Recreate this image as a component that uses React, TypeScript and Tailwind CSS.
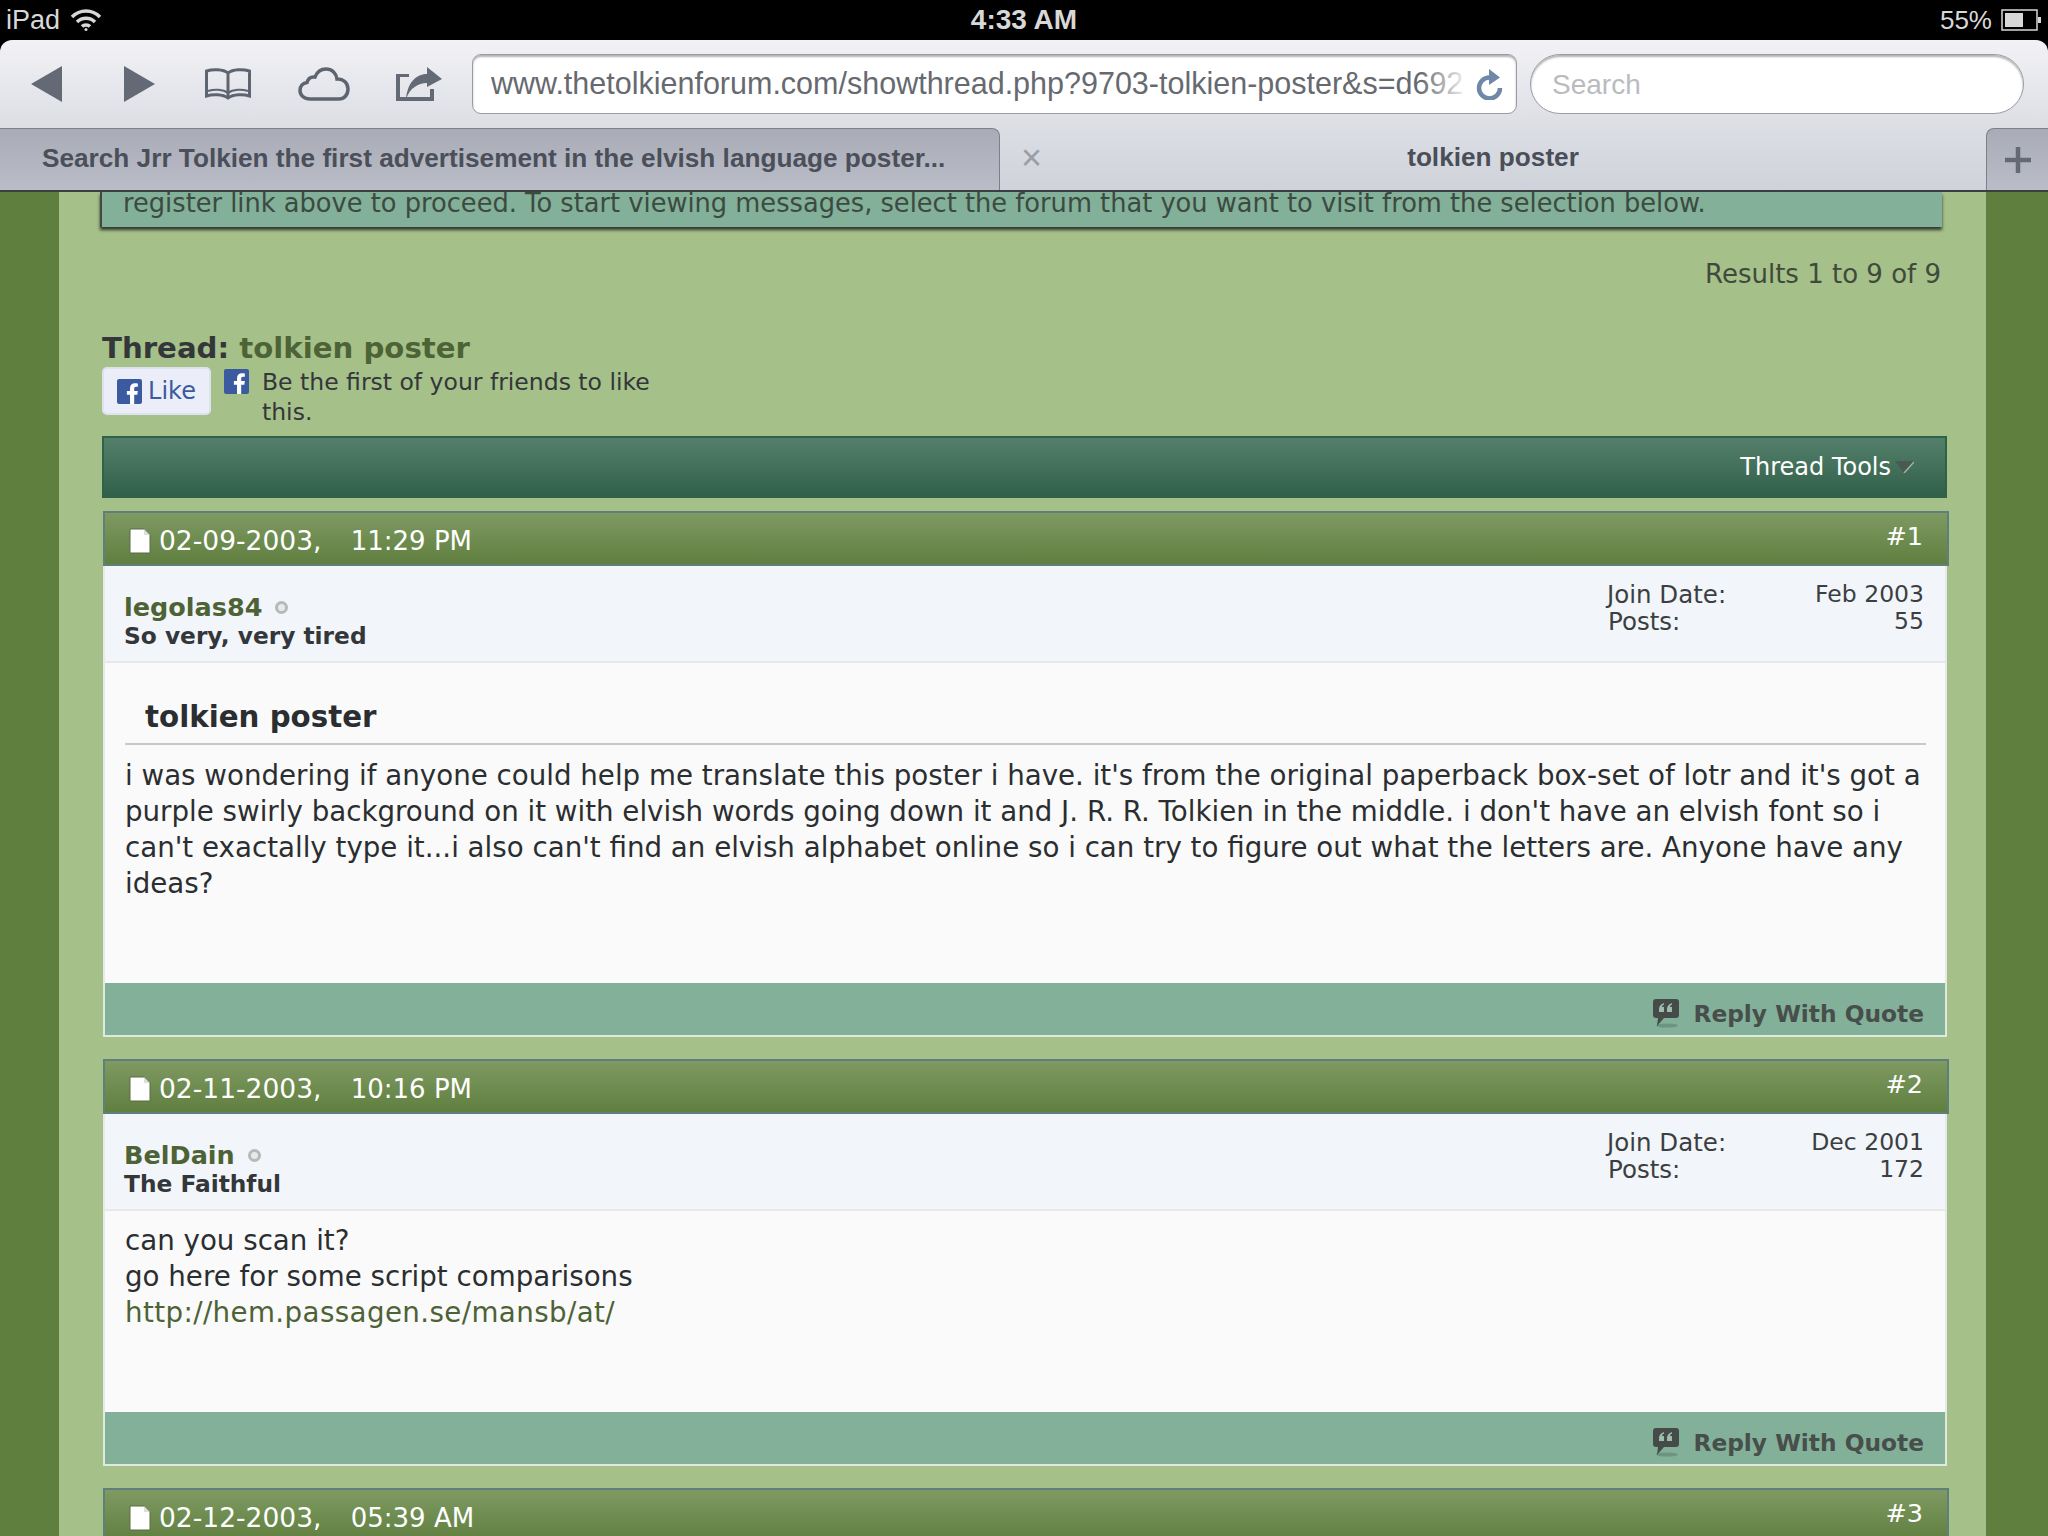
const verdana = { fontFamily: '"DejaVu Sans", sans-serif' };
const helvetica = { fontFamily: '"Liberation Sans", sans-serif' };

function PageIcon() {
  return (
    <svg width="22" height="26" viewBox="0 0 22 26" className="shrink-0">
      <path d="M1 1h14l6 6v18H1z" fill="#ffffff" stroke="#5b6b48" strokeWidth="1" />
      <path d="M15 1l6 6h-6z" fill="#dedede" />
    </svg>
  );
}

function QuoteIcon() {
  return (
    <svg width="26" height="29" viewBox="0 0 26 29" className="shrink-0 mt-[8px]">
      <ellipse cx="14" cy="26.500" rx="11" ry="2" fill="#6c9480" />
      <path d="M3 0h20a3 3 0 0 1 3 3v13a3 3 0 0 1-3 3H11l-7 8 1-8H3a3 3 0 0 1-3-3V3a3 3 0 0 1 3-3z" fill="#454b48" />
      <path d="M11 4c-3 1-5 3-5 6v3h5V8H9c0-1 1-2 2-2.500zM19 4c-3 1-5 3-5 6v3h5V8h-2c0-1 1-2 2-2.500z" fill="#9dbcab" />
    </svg>
  );
}

function FbSquare({ size }: { size: number }) {
  return (
    <svg width={size} height={size} viewBox="0 0 24 24" className="shrink-0">
      <rect width="24" height="24" rx="2" fill="#3b5a9f" />
      <path d="M16.500 24v-9h3l.5-3.600h-3.500V9.300c0-1 .3-1.800 1.800-1.800H20V4.300c-.4 0-1.500-.2-2.800-.2-2.800 0-4.700 1.700-4.700 4.800v2.500H9.500V15h3v9z" fill="#ffffff" />
    </svg>
  );
}

function PostHeader({ date, time, num }: { date: string; time: string; num: string }) {
  return (
    <div className="h-[55px] border-2 border-[#5f7f7b] bg-gradient-to-b from-[#7f9a62] to-[#5f7f3f] text-white flex justify-between pl-[24px] pr-[24px] text-[26.500px]">
      <div className="flex items-center gap-[8px] pt-[5px]">
        <PageIcon />
        <span className="whitespace-pre">{date},   <span className="ml-[4px] text-[26px]">{time}</span></span>
      </div>
      <span className="pt-[4px] text-[25.500px]">{num}</span>
    </div>
  );
}

type PostProps = {
  date: string;
  time: string;
  num: string;
  user: string;
  title: string;
  joined: string;
  posts: string;
  bodyHeight: string;
  children: React.ReactNode;
};

function Post({ date, time, num, user, title, joined, posts, bodyHeight, children }: PostProps) {
  return (
    <div className="ml-px mr-[-2px]">
      <PostHeader date={date} time={time} num={num} />
      <div className="mr-[2px] border-l-2 border-r-2 border-[#e8eaea] bg-[#fafafa]">
        <div className="h-[97px] bg-[#f2f5f9] border-b-2 border-[#e6e8ea] flex justify-between pl-[19px] pr-[21px] pt-[15px]">
          <div className="mt-[8px]">
            <div className="flex items-center gap-[13px] leading-[36px]">
              <span className="text-[25.500px] font-bold text-[#4d6336]">{user}</span>
              <span className="w-[13px] h-[13px] rounded-full border-[3px] border-[#b5b9b8] bg-[#e8eaea]" />
            </div>
            <div className="text-[23.300px] leading-[22px] font-bold text-[#33373a]">{title}</div>
          </div>
          <div className="grid grid-cols-[auto_1fr] content-start w-[317px] text-[24.500px] leading-[27px] text-[#3b3f42]">
            <span>Join Date:</span>
            <span className="text-right text-[23.500px]">{joined}</span>
            <span className="pl-[1px]">Posts:</span>
            <span className="text-right text-[23.500px]">{posts}</span>
          </div>
        </div>
        <div className={`pl-[20px] pr-[19px] text-[27.700px] leading-[36px] text-[#2b2e30] ${bodyHeight}`}>{children}</div>
        <div className="h-[54px] bg-[#82b098] border-b-2 border-l-2 border-r-2 border-[#dfe9df] -mx-[2px] flex items-center justify-end gap-[14px] pr-[21px]">
          <QuoteIcon />
          <span className="mt-[10px] text-[23.300px] font-bold text-[#474e4b]">Reply With Quote</span>
        </div>
      </div>
    </div>
  );
}

export default function App() {
  return (
    <div className="w-[2048px] h-[1536px] overflow-hidden bg-black flex flex-col" style={verdana}>
      {/* status bar */}
      <div className="h-[40px] shrink-0 bg-black text-[#d8d8d8] flex justify-between items-center px-[6px] text-[27px]" style={helvetica}>
        <div className="flex items-center gap-[10px] w-[500px]">
          <span>iPad</span>
          <svg width="32" height="24" viewBox="0 0 32 24" fill="none" stroke="#d8d8d8" strokeWidth="3.500">
            <path d="M2 9c8-8 20-8 28 0M7 14c5-5 13-5 18 0M12 18.500c2-2 6-2 8 0" />
            <circle cx="16" cy="21.500" r="1.500" fill="#d8d8d8" stroke="none" />
          </svg>
        </div>
        <span className="text-[28px] font-bold">4:33 AM</span>
        <div className="flex items-center justify-end gap-[9px] w-[500px]">
          <span className="text-[26px]">55%</span>
          <svg width="41" height="22" viewBox="0 0 41 22">
            <rect x="1" y="1" width="35" height="20" fill="none" stroke="#d8d8d8" strokeWidth="1.500" />
            <rect x="4" y="4" width="18" height="14" fill="#d8d8d8" />
            <rect x="37" y="8" width="3" height="6" fill="#d8d8d8" />
          </svg>
        </div>
      </div>

      {/* safari toolbar */}
      <div className="h-[88px] shrink-0 rounded-t-[12px] bg-gradient-to-b from-[#f2f2f6] to-[#dcdee4] flex items-center pl-[31px] pr-[24px] text-[#6a707b]" style={helvetica}>
        <svg width="31" height="36" viewBox="0 0 31 36" className="mr-[62px]">
          <path d="M31 0v36L0 18z" fill="#646a75" />
        </svg>
        <svg width="31" height="36" viewBox="0 0 31 36" className="mr-[49px]">
          <path d="M0 0v36l31-18z" fill="#646a75" />
        </svg>
        <svg width="48" height="32" viewBox="0 0 48 32" fill="none" stroke="#5f6570" strokeWidth="3" className="mr-[46px]">
          <path d="M24 5C19 1 9 1 2.500 3v25c6-2 16-2 21.500 2 5.500-4 15.500-4 21.500-2V3C39 1 29 1 24 5zM24 5v25" />
          <path d="M4 23c6-2 15-2 20 2 5-4 14-4 20-2" strokeWidth="2" />
        </svg>
        <svg width="52" height="34" viewBox="0 0 52 34" fill="none" stroke="#5f6570" strokeWidth="3.500" className="mr-[46px]">
          <path d="M12 32C6 32 2 28 2 23.500c0-4.500 3-7.500 7-8 1-4 4-6 8-5.500C19 5 23 2 28 2c6 0 10 4 11 10 6-.5 11 4 11 10 0 6-4 10-9 10z" />
        </svg>
        <svg width="46" height="36" viewBox="0 0 46 36" className="mr-[30px]">
          <path d="M0 8h13v3H4v20h30V23h4v12H0z" fill="#646a75" />
          <path d="M31 1l15 12-15 8v-4c-9 0-17 5-21 16 2-19 12-25 21-25z" fill="#646a75" />
        </svg>
        <div className="w-[1045px] h-[60px] bg-white rounded-[9px] border border-[#9a9ca2] shadow-[inset_0_2px_2px_rgba(0,0,0,0.3)] flex items-center pl-[18px] pr-[12px] text-[30.500px] text-[#666a70] overflow-hidden">
          <div className="relative flex-1 overflow-hidden">
            <span className="whitespace-nowrap">www.thetolkienforum.com/showthread.php?9703-tolkien-poster&s=d692</span>
            <div className="absolute top-0 bottom-0 right-0 w-[50px] bg-gradient-to-r from-transparent to-white" />
          </div>
          <svg width="28" height="32" viewBox="0 0 28 32" className="shrink-0 ml-[6px]">
            <path d="M24 20a10.500 10.500 0 1 1-10.500-10.500" fill="none" stroke="#7088a8" strokeWidth="4.500" />
            <path d="M13 1l11 8.500L13 17z" fill="#7088a8" />
          </svg>
        </div>
        <div className="w-[494px] h-[60px] ml-[13px] bg-white rounded-[30px] border border-[#9a9ca2] shadow-[inset_0_2px_2px_rgba(0,0,0,0.3)] flex items-center pl-[21px] pt-[1px] text-[28px] text-[#b9bbbf]">
          Search
        </div>
      </div>

      {/* tabs */}
      <div className="h-[64px] shrink-0 flex bg-gradient-to-b from-[#dcdee4] to-[#cfd2da] border-b-2 border-[#3c3e42] text-[26.200px] font-bold text-[#4a4e58]" style={helvetica}>
        <div className="w-[1000px] rounded-tr-[8px] bg-gradient-to-b from-[#a9acb6] to-[#babdc7] border-t border-r border-[#7e8088] flex items-center pl-[42px] pb-[2px] text-[#4b4f5a] whitespace-nowrap">
          Search Jrr Tolkien the first advertisement in the elvish language poster...
        </div>
        <div className="flex-1 flex items-center pl-[21px] pb-[2px]">
          <span className="text-[36px] font-normal text-[#9a9ea8]">×</span>
          <span className="flex-1 text-center pr-[42px]">tolkien poster</span>
        </div>
        <div className="w-[62px] rounded-tl-[8px] bg-gradient-to-b from-[#a9acb6] to-[#babdc7] border-t border-l border-[#7e8088] flex items-center justify-center">
          <svg width="26" height="26" viewBox="0 0 26 26">
            <path d="M13 0v26M0 13h26" stroke="#646a75" strokeWidth="4.500" />
          </svg>
        </div>
      </div>

      {/* page */}
      <div className="flex-1 flex bg-[#5f7f3f] overflow-hidden">
        <div className="w-[59px] shrink-0" />
        <div className="w-[1927px] shrink-0 bg-[#a5c089] pl-[43px] pr-[39px]">
          <div className="ml-[-2px] mr-[5px] h-[35px] bg-[#82b098] border-l-2 border-[#3f4a3f] shadow-[0_3px_3px_#333833] pl-[21px] text-[25.700px] leading-[22px] text-[#3d4a42]">
            register link above to proceed. To start viewing messages, select the forum that you want to visit from the selection below.
          </div>
          <div className="text-right text-[26px] leading-[32px] text-[#3f4a3c] pt-[31px] pr-[6px]">Results 1 to 9 of 9</div>
          <div className="mt-[39px] text-[29.200px] leading-[38px] font-bold text-[#33373a]">
            Thread: <span className="text-[#4d6336]">tolkien poster</span>
          </div>
          <div className="flex items-start">
            <div className="w-[109px] h-[48px] rounded-[5px] border-2 border-[#dde2ee] bg-[#ebeef8] flex items-center justify-center gap-[6px] text-[24px] text-[#3b5a9f]">
              <FbSquare size={25} />
              <span>Like</span>
            </div>
            <div className="ml-[13px] mt-[2px]">
              <FbSquare size={25} />
            </div>
            <div className="ml-[13px] w-[420px] text-[23.500px] leading-[30px] text-[#33373a]">Be the first of your friends to like this.</div>
          </div>
          <div className="mt-[9px] h-[62px] border-2 border-[#2f6349] bg-gradient-to-b from-[#54806b] to-[#31604a] flex items-center justify-end pr-[31px] text-[24px] text-white">
            <span>Thread Tools</span>
            <svg width="19" height="12" viewBox="0 0 19 12" className="ml-[4px]">
              <path d="M0 0h19L9 12z" fill="#4a5a52" />
              <path d="M9 12L19 1" stroke="#9fb5a8" strokeWidth="1.500" />
            </svg>
          </div>
          <div className="mt-[13px] flex flex-col gap-[22px]">
            <Post date="02-09-2003" time="11:29 PM" num="#1" user="legolas84" title="So very, very tired" joined="Feb 2003" posts="55" bodyHeight="h-[320px]">
              <div className="pt-[36px] pl-[20px] pb-[8px] text-[29.300px] leading-[36px] font-bold text-[#2b2e30] border-b-2 border-[#c8cac8]">tolkien poster</div>
              <div className="pt-[13px]">
                i was wondering if anyone could help me translate this poster i have. it's from the original paperback box-set of lotr and it's got a purple swirly background on it with elvish words going down it and J. R. R. Tolkien in the middle. i don't have an elvish font so i can't exactally type it...i also can't find an elvish alphabet online so i can try to figure out what the letters are. Anyone have any ideas?
              </div>
            </Post>
            <Post date="02-11-2003" time="10:16 PM" num="#2" user="BelDain" title="The Faithful" joined="Dec 2001" posts="172" bodyHeight="h-[201px]">
              <div className="pt-[12px]">
                can you scan it?
                <br />
                go here for some script comparisons
                <br />
                <span className="text-[#4d6336] tracking-[0.4px]">http://hem.passagen.se/mansb/at/</span>
              </div>
            </Post>
            <div className="ml-px mr-[-2px]">
              <PostHeader date="02-12-2003" time="05:39 AM" num="#3" />
            </div>
          </div>
        </div>
      </div>
    </div>
  );
}
